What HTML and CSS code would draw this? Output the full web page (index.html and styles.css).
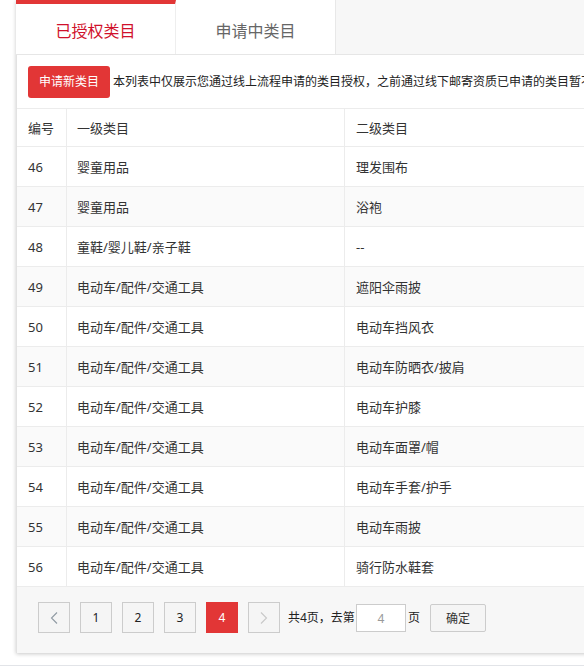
FILE: index.html
```html
<!DOCTYPE html>
<html lang="zh-CN">
<head>
<meta charset="utf-8">
<title>类目管理</title>
<link rel="stylesheet" href="styles.css">
</head>
<body>
<div class="wrap">
  <div class="tabs">
    <div class="tab tab-active">已授权类目</div>
    <div class="tab">申请中类目</div>
  </div>
  <div class="panel">
    <div class="toolbar">
      <button class="btn-apply">申请新类目</button>
      <span class="desc">本列表中仅展示您通过线上流程申请的类目授权，之前通过线下邮寄资质已申请的类目暂不在此列表中展示</span>
    </div>
    <div class="table">
      <div class="row head">
        <div class="cell c1">编号</div>
        <div class="cell c2">一级类目</div>
        <div class="cell c3">二级类目</div>
      </div>
      <div class="row"><div class="cell c1">46</div><div class="cell c2">婴童用品</div><div class="cell c3">理发围布</div></div>
      <div class="row alt"><div class="cell c1">47</div><div class="cell c2">婴童用品</div><div class="cell c3">浴袍</div></div>
      <div class="row"><div class="cell c1">48</div><div class="cell c2">童鞋/婴儿鞋/亲子鞋</div><div class="cell c3">--</div></div>
      <div class="row alt"><div class="cell c1">49</div><div class="cell c2">电动车/配件/交通工具</div><div class="cell c3">遮阳伞雨披</div></div>
      <div class="row"><div class="cell c1">50</div><div class="cell c2">电动车/配件/交通工具</div><div class="cell c3">电动车挡风衣</div></div>
      <div class="row alt"><div class="cell c1">51</div><div class="cell c2">电动车/配件/交通工具</div><div class="cell c3">电动车防晒衣/披肩</div></div>
      <div class="row"><div class="cell c1">52</div><div class="cell c2">电动车/配件/交通工具</div><div class="cell c3">电动车护膝</div></div>
      <div class="row alt"><div class="cell c1">53</div><div class="cell c2">电动车/配件/交通工具</div><div class="cell c3">电动车面罩/帽</div></div>
      <div class="row"><div class="cell c1">54</div><div class="cell c2">电动车/配件/交通工具</div><div class="cell c3">电动车手套/护手</div></div>
      <div class="row alt"><div class="cell c1">55</div><div class="cell c2">电动车/配件/交通工具</div><div class="cell c3">电动车雨披</div></div>
      <div class="row"><div class="cell c1">56</div><div class="cell c2">电动车/配件/交通工具</div><div class="cell c3">骑行防水鞋套</div></div>
    </div>
    <div class="pager">
      <span class="pg pg-prev"><svg width="8" height="12" viewBox="0 0 8 12"><polyline points="7,0.5 1.5,6 7,11.5" fill="none" stroke="#8f9aa3" stroke-width="1.1"/></svg></span>
      <span class="pg">1</span>
      <span class="pg">2</span>
      <span class="pg">3</span>
      <span class="pg pg-cur">4</span>
      <span class="pg pg-next"><svg width="8" height="12" viewBox="0 0 8 12"><polyline points="1,0.5 6.5,6 1,11.5" fill="none" stroke="#c8c8c8" stroke-width="1.1"/></svg></span>
      <span class="pg-text">共4页，去第</span>
      <input class="pg-input" type="text" value="4">
      <span class="pg-text2">页</span>
      <button class="pg-ok">确定</button>
    </div>
  </div>
</div>
<div class="foot-line"></div>
</body>
</html>
```

FILE: styles.css
```css
html, body {
  margin: 0;
  padding: 0;
  overflow: hidden;
  background: #fff;
}
body {
  font-family: "Noto Sans", "Noto Sans CJK SC", sans-serif;
  color: #333;
  width: 584px;
  height: 668px;
}
.wrap {
  margin-left: 16px;
  width: 1100px;
  background: #f7f7f7;
  box-shadow: 0 1px 4px rgba(0, 0, 0, 0.22);
}
.tabs {
  display: flex;
  height: 55px;
  box-sizing: border-box;
  border-bottom: 1px solid #e6e6e6;
  background: #f7f7f7;
}
.tab {
  width: 160px;
  height: 54px;
  box-sizing: border-box;
  background: #fff;
  font-size: 16px;
  color: #666;
  display: flex;
  align-items: center;
  justify-content: center;
  border-right: 1px solid #e8e8e8;
  padding-top: 6px;
}
.tab-active {
  border-top: 4px solid #e23636;
  color: #d0112b;
  padding-top: 2px;
  border-right: 1px solid #eeeeee;
}
.panel {
  background: #fff;
  border-left: 1px solid #e2e2e2;
}
.toolbar {
  display: flex;
  align-items: center;
  padding: 11px 0 10px 11px;
  white-space: nowrap;
}
.btn-apply {
  width: 82px;
  height: 32px;
  border: 0;
  border-radius: 3px;
  background: #e23636;
  color: #fff;
  font-family: inherit;
  font-size: 12px;
  padding: 0;
  line-height: 32px;
}
.desc {
  margin-left: 3px;
  font-size: 12px;
  color: #222;
  line-height: 16px;
}
.table {
  border-top: 1px solid #ececec;
}
.row {
  display: grid;
  grid-template-columns: 50px 278px 1fr;
  height: 40px;
  box-sizing: border-box;
  border-bottom: 1px solid #ececec;
  font-size: 13px;
  color: #333;
}
.row.head {
  height: 38px;
}
.row.alt {
  background: #fafafa;
}
.cell {
  display: flex;
  align-items: center;
  padding-left: 11px;
  line-height: 18px;
}
.c1 {
  border-right: 1px solid #ececec;
}
.c2 {
  border-right: 1px solid #ececec;
  padding-left: 10px;
}
.c3 {
  padding-left: 11px;
}
.pager {
  background: #f7f7f7;
  height: 66px;
  box-sizing: border-box;
  padding: 15px 0 0 21px;
  display: flex;
  align-items: flex-start;
  font-size: 12px;
}
.pg {
  width: 32px;
  height: 31px;
  box-sizing: border-box;
  border: 1px solid #cccccc;
  background: #f5f5f5;
  margin-right: 10px;
  display: flex;
  align-items: center;
  justify-content: center;
  color: #222;
  font-size: 12px;
}
.pg-cur {
  background: #e23636;
  border-color: #e23636;
  color: #fff;
}
.pg-next {
  margin-right: 8px;
}
.pg-text, .pg-text2 {
  line-height: 28px;
  margin-top: 2px;
  color: #222;
}
.pg-input {
  width: 50px;
  height: 28px;
  box-sizing: border-box;
  margin: 2px 2px 0 1px;
  border: 1px solid #cccccc;
  background: #fff;
  text-align: center;
  color: #999;
  font-family: inherit;
  font-size: 12px;
  padding: 0;
  outline: none;
}
.pg-ok {
  margin: 2px 0 0 10px;
  width: 56px;
  height: 28px;
  box-sizing: border-box;
  border: 1px solid #cccccc;
  border-radius: 2px;
  background: #f5f5f5;
  color: #333;
  font-family: inherit;
  font-size: 12px;
  padding: 0;
}
.foot-line {
  margin-top: 12px;
  border-top: 1px solid #e2e4e8;
}
```
